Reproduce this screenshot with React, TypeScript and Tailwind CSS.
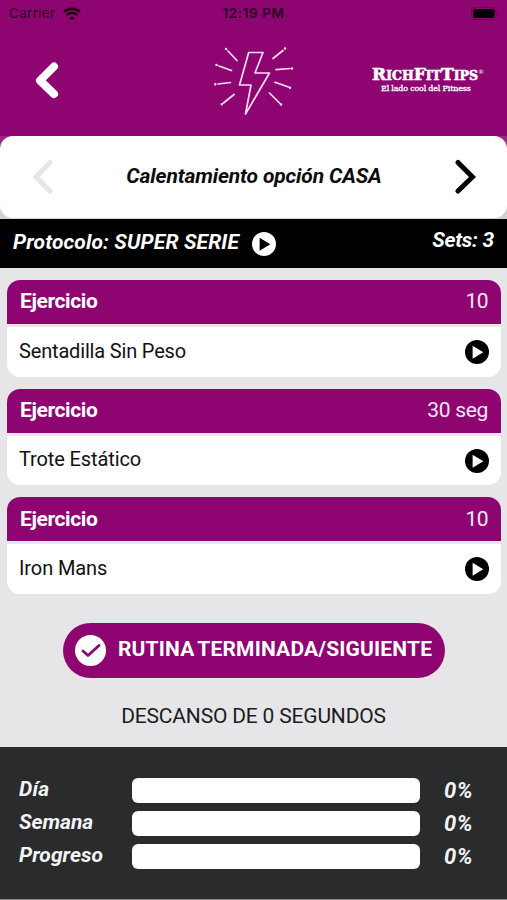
import React from "react";

interface Exercise {
	name: string;
	amount: string;
	amountClass: string;
	nameClass: string;
}

const exercises: Exercise[] = [
	{ name: "Sentadilla Sin Peso", amount: "10", amountClass: "tracking-[-0.5px]", nameClass: "tracking-[-0.17px]" },
	{ name: "Trote Estático", amount: "30 seg", amountClass: "tracking-[-0.3px]", nameClass: "tracking-[-0.12px]" },
	{ name: "Iron Mans", amount: "10", amountClass: "tracking-[-0.5px]", nameClass: "tracking-[-0.1px]" },
];

const progress = [
	{ label: "Día", value: 0, labelClass: "tracking-[0.2px]" },
	{ label: "Semana", value: 0, labelClass: "tracking-[-0.05px]" },
	{ label: "Progreso", value: 0, labelClass: "tracking-[0.05px]" },
];

const PlayIcon: React.FC<{ className: string; arrow: string }> = ({ className, arrow }) => (
	<svg viewBox="0 0 24 24" className={className} fill="currentColor">
		<circle cx="12" cy="12" r="12" />
		<path d="M7.600 5.700v13L18.300 12.200z" className={arrow} />
	</svg>
);

const WifiIcon = () => (
	<svg viewBox="0 0 18 14" className="ml-[8px] h-[14px] w-[18px]" fill="none" stroke="#17000f" strokeWidth="2.5">
		<path d="M1 5C5.6.5 12.4.5 17 5" />
		<path d="M4 8.2c2.900-2.800 7.100-2.800 10 0" />
		<path d="M9 13.500l-2.700-2.800c1.500-1.400 3.900-1.400 5.400 0z" fill="#17000f" stroke="none" />
	</svg>
);

const BoltIcon = () => (
	<svg viewBox="0 0 110 90" className="h-[90px] w-[110px]" fill="none" stroke="#ffdcf9" strokeWidth="1.700" strokeLinecap="round" strokeLinejoin="round">
		<path d="M48.700 17.500H63L55 38h14.500L45.500 79l5.500-29H39.500z" />
		<path d="M28 16l9 9.500M19 31l12.500 4.500M18 49l12.500-1.500M23.500 68l10.500-8.500M83 15.500L73 23.500M90 33.500l-14 1.200M88.500 52L75 47.300M80 68.500L69.500 58" />
		<path d="M26 14h.1M16.500 30h.1M15.200 49.200h.1M21.800 69.200h.1M85 13.500h.1M92 33.500h.1M90 52.800h.1M81 69.500h.1" strokeWidth="2.400" />
	</svg>
);

const Header = () => (
	<header className="flex h-[136px] flex-col bg-[#8e0572]">
		<div className="grid h-[27px] grid-cols-3 items-center font-[Inter,sans-serif] text-[13.500px] leading-none text-[#2b0021]">
			<div className="flex items-center pt-px pl-[9px]">
				<span className="tracking-[0.3px]">Carrier</span>
				<WifiIcon />
			</div>
			<div className="pt-px text-center font-semibold tracking-[0.6px]">12:19 PM</div>
			<div className="flex justify-end pr-[8px]">
				<svg viewBox="0 0 28 14" className="h-[14px] w-[28px]">
					<rect x="0.500" y="0.500" width="24.500" height="12" rx="3.500" fill="none" stroke="#6e0458" />
					<rect x="2" y="2" width="21.500" height="9" rx="2" fill="#000" />
					<path d="M26.500 5v4c1.300-.7 1.300-3.300 0-4z" fill="#6e0458" />
				</svg>
			</div>
		</div>
		<div className="flex flex-1 items-start">
			<div className="w-[200px] pl-[34px] pt-[34px]">
				<svg viewBox="0 0 26 38" className="h-[38px] w-[26px]" fill="none" stroke="#fff" strokeWidth="8" strokeLinecap="round" strokeLinejoin="round">
					<path d="M20 5.500L6 19.500 20 33" />
				</svg>
			</div>
			<div className="pt-[8px]">
				<BoltIcon />
			</div>
			<div className="ml-[62px] flex flex-col pt-[38px] font-['DejaVu_Serif',serif] font-bold text-white">
				<div className="flex h-[19px] items-baseline leading-[19px] whitespace-nowrap [-webkit-text-stroke:0.6px_white]">
					<span className="text-[17px]">R</span>
					<span className="text-[12.500px]">ICH</span>
					<span className="text-[17px]">F</span>
					<span className="text-[12.500px]">IT</span>
					<span className="text-[17px]">T</span>
					<span className="text-[12.500px]">IPS</span>
					<span className="self-start text-[6px] leading-[13px] font-normal [-webkit-text-stroke:0]">®</span>
				</div>
				<span className="pl-[9px] text-[8px] leading-[10px] font-normal tracking-[-0.2px] whitespace-nowrap [-webkit-text-stroke:0.3px_white]">El lado cool del Fitness</span>
			</div>
		</div>
	</header>
);

const ExerciseCard: React.FC<{ exercise: Exercise }> = ({ exercise }) => (
	<div className="h-[96.500px] overflow-hidden rounded-[13px] bg-white">
		<div className="flex h-[47px] items-center justify-between border-b-[3px] border-[#e9e7ea] bg-[#8e0572] px-[13px] text-[21px] text-[#fbe5f6]">
			<span className="font-bold tracking-[-0.4px] text-white">Ejercicio</span>
			<span className={exercise.amountClass}>{exercise.amount}</span>
		</div>
		<div className="flex h-[49px] items-center justify-between pr-[12px] pl-[12px] text-[20px] text-[#111]">
			<span className={`mb-[2px] ${exercise.nameClass}`}>{exercise.name}</span>
			<PlayIcon className="mt-[1px] h-[24px] w-[24px] text-black" arrow="fill-white" />
		</div>
	</div>
);

const App = () => (
	<div className="flex h-[900px] w-[507px] flex-col overflow-hidden bg-[#e6e6e8] font-[Roboto,sans-serif]">
		<Header />
		<div className="h-[83px] bg-linear-to-b from-[#9b2a84] from-50% to-[#d2d2d4] to-50%">
			<div className="flex h-[82px] items-center justify-between rounded-[13px] bg-white pr-[31px] pl-[32px]">
				<svg viewBox="0 0 22 36" className="h-[36px] w-[22px]" fill="none" stroke="#e6e6e6" strokeWidth="5" strokeLinecap="round">
					<path d="M18 3.500L4 18l14 14" />
				</svg>
				<h1 className="mb-px text-[21px] font-bold tracking-[-0.14px] text-[#0b0b0b] italic">Calentamiento opción CASA</h1>
				<svg viewBox="0 0 22 36" className="h-[36px] w-[22px]" fill="none" stroke="#000" strokeWidth="5" strokeLinecap="round">
					<path d="M4 3.500L18.500 18 4 32" />
				</svg>
			</div>
		</div>
		<div className="flex h-[49px] items-center bg-black pr-[13px] pl-[13px] text-[21px] font-bold text-white italic">
			<span className="mb-[2px] tracking-[0.130px]">Protocolo: SUPER SERIE</span>
			<PlayIcon className="ml-[13px] h-[24px] w-[24px]" arrow="fill-black" />
			<span className="mb-[6px] ml-auto tracking-[-0.25px]">Sets: 3</span>
		</div>
		<main className="flex flex-col gap-[12.200px] pt-[12px] pr-[6px] pl-[7px]">
			{exercises.map((exercise) => (
				<ExerciseCard key={exercise.name} exercise={exercise} />
			))}
		</main>
		<button className="mt-[29px] ml-[63px] flex h-[55px] w-[382px] items-center rounded-full bg-[#8e0572] pl-[12px] text-[21px] font-bold text-white">
			<svg viewBox="0 0 31 31" className="h-[31px] w-[31px] shrink-0">
				<circle cx="15.500" cy="15.500" r="15.500" fill="#fff" />
				<path d="M8 16l5 4.500L24 10.500" fill="none" stroke="#8e0572" strokeWidth="2.800" strokeLinecap="round" strokeLinejoin="round" />
			</svg>
			<span className="mb-px ml-[12px] tracking-[0.160px] whitespace-nowrap [word-spacing:-2px]">RUTINA TERMINADA/SIGUIENTE</span>
		</button>
		<p className="mt-[23px] text-center text-[21px] leading-[30px] tracking-[-0.180px] text-[#1c1c1e]">DESCANSO DE 0 SEGUNDOS</p>
		<footer className="mt-auto flex h-[153px] flex-col gap-[8px] border-b border-[#858788] bg-[#292b2c] pt-[31px] text-[21px] font-bold text-[#f4f4f4] italic">
			{progress.map((item) => (
				<div key={item.label} className="flex h-[25px] items-center">
					<span className={`mb-px w-[132px] pl-[19px] ${item.labelClass}`}>{item.label}</span>
					<div className="h-[25px] w-[288px] overflow-hidden rounded-[6px] bg-white">
						<div className="h-full bg-[#8e0572]" style={{ width: `${item.value}%` }} />
					</div>
					<span className="mb-px ml-[24px] text-[22px] tracking-[0.500px]">{item.value}%</span>
				</div>
			))}
		</footer>
	</div>
);

export default App;
